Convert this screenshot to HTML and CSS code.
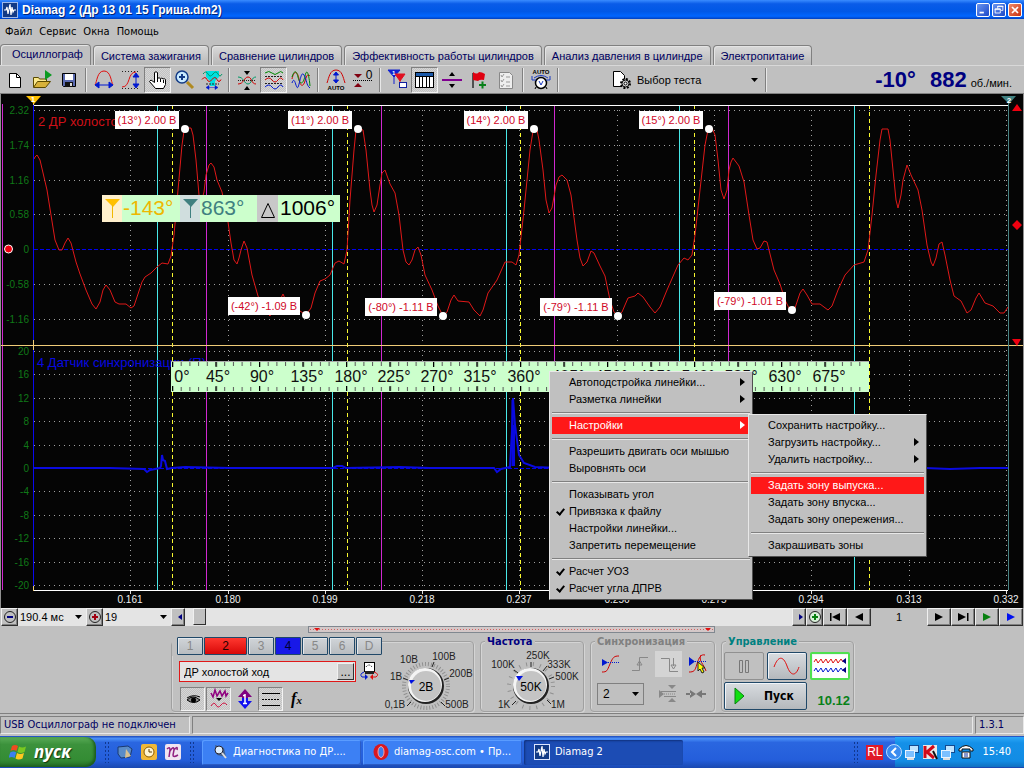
FILE: index.html
```html
<!DOCTYPE html>
<html lang="ru">
<head>
<meta charset="utf-8">
<title>Diamag 2</title>
<link rel="stylesheet" href="styles.css">
</head>
<body>
<header class="titlebar">
  <svg class="app-icon" viewBox="0 0 16 16"><rect x=".5" y=".5" width="15" height="15" fill="#123a86" stroke="#9db8ea"/><path d="M2 8h2l1-3 1 7 2-10 1 11 1-8 1 5 1-2h2" fill="none" stroke="#fff" stroke-width="1.2"/></svg>
  <h1 class="title">Diamag 2 (Др 13 01 15 Гриша.dm2)</h1>
  <div class="window-buttons">
    <button class="wbtn" aria-label="Свернуть"><svg viewBox="0 0 14 14"><path d="M3 10h5" stroke="#fff" stroke-width="2"/></svg></button>
    <button class="wbtn" aria-label="Восстановить"><svg viewBox="0 0 14 14"><path d="M5.500 5.500v-3h6v5h-2M5 3h7M2.500 5.500h6v5h-6zM2 6.500h7" fill="none" stroke="#fff"/></svg></button>
    <button class="wbtn wbtn-close" aria-label="Закрыть"><svg viewBox="0 0 14 14"><path d="M3.500 3.500l7 7M10.500 3.500l-7 7" stroke="#fff" stroke-width="2"/></svg></button>
  </div>
</header>
<nav class="menubar">
  <button>Файл</button><button>Сервис</button><button>Окна</button><button>Помощь</button>
</nav>
<div class="tabs" role="tablist">
  <button class="tab tab-active" role="tab">Осциллограф</button>
  <button class="tab" role="tab">Система зажигания</button>
  <button class="tab" role="tab">Сравнение цилиндров</button>
  <button class="tab" role="tab">Эффективность работы цилиндров</button>
  <button class="tab" role="tab">Анализ давления в цилиндре</button>
  <button class="tab" role="tab">Электропитание</button>
</div>
<div class="toolbar">
  <button class="tool" aria-label="Новый"><svg viewBox="0 0 22 22"><path d="M5.500 4.500h7l4 4v10h-11z" fill="#fff" stroke="#000"/><path d="M12.500 4.500v4h4" fill="none" stroke="#000"/></svg></button>
  <button class="tool" aria-label="Открыть"><svg viewBox="0 0 22 22"><path d="M2.500 18V8.500h5l1 1.500h7v3" fill="#fbe98c" stroke="#5a4a00"/><path d="M2.500 18.500l4-6h13l-5 6z" fill="#d8b23a" stroke="#5a4a00"/><path d="M14 1l7 5-7 5z" fill="#0a9a20"/></svg></button>
  <button class="tool" aria-label="Сохранить"><svg viewBox="0 0 22 22"><path d="M4.500 4.500h13v13h-12l-1-1z" fill="#5a6ab0" stroke="#000"/><rect x="7" y="5" width="8" height="6" fill="#fff"/><rect x="7" y="13" width="8" height="5" fill="#111"/><rect x="12" y="14" width="2" height="3" fill="#ddd"/></svg></button>
  <span class="sep"></span>
  <button class="tool" aria-label="Развернуть по горизонтали"><svg viewBox="0 0 22 22" fill="none"><path d="M2 16C4 13 4 2 11 2s7 11 9 14" stroke="#e01010"/><path d="M4 16h14M6 13l-4 3 4 3zM16 13l4 3-4 3z" stroke="#0018d0" fill="#0018d0"/></svg></button>
  <button class="tool" aria-label="Развернуть по вертикали"><svg viewBox="0 0 22 22" fill="none"><path d="M2 2.500h18M2 19.500h18" stroke="#222" stroke-dasharray="1 2"/><path d="M2 18c9 0 5-15 14-15" stroke="#e01010"/><path d="M16 6v11M13 8l3-4 3 4zM13 15l3 4 3-4z" stroke="#0018d0" fill="#0018d0"/></svg></button>
  <button class="tool tool-on" aria-label="Рука"><svg viewBox="0 0 22 22"><path d="M8.500 19.500l-6-7 1.500-1.500 3.500 2.500V3.500q1.500-1.500 3 0v6q1.500-1.500 3 0 1.500-1 2.500.5 1.500-.8 2.500.5v5l-2 4z" fill="#fff" stroke="#000"/><path d="M10.500 9v4M13.500 10v3M16.500 11v3" stroke="#000"/></svg></button>
  <button class="tool" aria-label="Лупа"><svg viewBox="0 0 22 22"><path d="M13 13l6 6" stroke="#b08a20" stroke-width="3"/><circle cx="8" cy="8" r="6" fill="#c8eaff" stroke="#123a86" stroke-width="1.500"/><path d="M5 8h6M8 5v6" stroke="#123a86" stroke-width="2"/></svg></button>
  <button class="tool" aria-label="Область"><svg viewBox="0 0 22 22" fill="none"><path d="M5 2h13v6l-4 4v5H9v-5L5 8z" fill="#00e0e0"/><path d="M2 5q3-4 5 0t5 0 5 0 4 0" stroke="#096"/><path d="M1 10.500q3-4 5 0t5 0 5 0 4 0" stroke="#d00000"/><path d="M5 15h13" stroke="#222" stroke-dasharray="2 1"/><path d="M8 16.500l-3 2 3 2zM14 16.500l3 2-3 2zM7 18.500h8" fill="#0018d0" stroke="#0018d0" stroke-width=".5"/></svg></button>
  <span class="sep"></span>
  <button class="tool" aria-label="Совместить"><svg viewBox="0 0 22 22" fill="none"><path d="M8 2h6l-3 4zM8 21h6l-3-4z" fill="#000"/><path d="M2 11.500h18" stroke="#222" stroke-dasharray="1 1"/><path d="M2 8c6 0 6 7 10 7s3-7 8-7" stroke="#096"/><path d="M2 15c6 0 6-7 10-7s3 7 8 7" stroke="#d00000"/></svg></button>
  <button class="tool tool-on" aria-label="Раздельно"><svg viewBox="0 0 22 22" fill="none"><path d="M2 4q4-3 7 0t6 0 5 0" stroke="#080"/><path d="M2 11q4-4 7 0t6 0 5 0" stroke="#d00000"/><path d="M2 18q4-4 7 0t6 0 5 0" stroke="#0018d0"/><path d="M2 7.500h18M2 14.500h18" stroke="#222" stroke-dasharray="2 1"/></svg></button>
  <button class="tool" aria-label="Наложить"><svg viewBox="0 0 22 22" fill="none"><path d="M2 10C4 0 8 3 9 10s4 9 6 2 3-7 5-5" stroke="#d00000"/><path d="M2 8C4 2 6 0 8 8s5 8 7-1 4-1 5 10" stroke="#080"/><path d="M2 14c3-9 4 8 6 4s3-17 6-12 2 10 6 13" stroke="#0018d0"/></svg></button>
  <span class="sep"></span>
  <button class="tool" aria-label="Автомасштаб"><svg viewBox="0 0 22 22" fill="none"><path d="M2 14C4 8 5 1 11 1s7 7 9 13" stroke="#d00000"/><path d="M11 4v9M8.500 6l2.500-3 2.500 3zM8.500 11l2.500 3 2.500-3z" stroke="#0018d0" fill="#0018d0"/><text x="11" y="21" text-anchor="middle" class="icon-text">AUTO</text></svg></button>
  <button class="tool" aria-label="Ноль"><svg viewBox="0 0 22 22"><path d="M2 5h8l-4 4zM2 18h8l-4-4z" fill="#800010"/><path d="M1 11.500h20" stroke="#000" stroke-dasharray="1 1"/><text x="17" y="10" text-anchor="middle" class="icon-zero">0</text></svg></button>
  <span class="sep"></span>
  <button class="tool" aria-label="Маркеры"><svg viewBox="0 0 22 22"><path d="M1 1h12L7 8zM7 6v9" fill="#1020d0" stroke="#1020d0"/><path d="M8 5h10l-5 7zM13 10v7" fill="#e01020" stroke="#e01020"/><text x="5" y="6" class="icon-tiny">1</text><rect x="12.500" y="13.500" width="7" height="5" fill="#fff" stroke="#1020a0"/></svg></button>
  <button class="tool tool-on" aria-label="Таблица"><svg viewBox="0 0 22 22"><rect x="1.500" y="3.500" width="18" height="15" fill="#fff" stroke="#000"/><path d="M2 4h17v3H2z" fill="#1a58a8"/><path d="M5.500 7v11M8.500 7v11M12.500 7v11M15.500 7v11M2 7.500h17" stroke="#000"/></svg></button>
  <button class="tool" aria-label="Уровень"><svg viewBox="0 0 22 22"><path d="M1 11h20" stroke="#800090" stroke-width="2"/><path d="M8 7l3-4 3 4zM8 15l3 4 3-4z" fill="#000"/></svg></button>
  <button class="tool" aria-label="Флаг"><svg viewBox="0 0 22 22"><path d="M5 4v15" stroke="#505050" stroke-width="2"/><path d="M5 3q4 3 6 0 3 0 6 2l-1 6q-4-1-6 1l-5-1z" fill="#e00010"/><path d="M11 16h7M14.500 12.500v7" stroke="#08801a" stroke-width="2"/></svg></button>
  <button class="tool" aria-label="Отчёт"><svg viewBox="0 0 22 22"><path d="M4.500 3.500h10l3 3v13h-13z" fill="#eee" stroke="#888"/><path d="M6 6l1 2 2-3M6 11l1 2 2-3M6 16l1 2 2-3M11 8h4M11 13h4M11 17h4" fill="none" stroke="#999"/></svg></button>
  <span class="sep"></span>
  <button class="tool" aria-label="Автоизмерение"><svg viewBox="0 0 22 22"><text x="11" y="5" text-anchor="middle" class="icon-text">AUTO</text><circle cx="11" cy="14" r="5.500" fill="#fff" stroke="#000" stroke-width="1.500"/><path d="M4 9q7-5 14 0M2 7v4h4M20 7v4h-4" fill="none" stroke="#1838c0"/><path d="M9 12l2 4 2-4" fill="none" stroke="#1838c0"/><path d="M6 18l-1 2M16 18l1 2" stroke="#000"/></svg></button>
  <span class="sep"></span>
  <label class="test-pick">
    <svg viewBox="0 0 22 22"><path d="M2.500 2.500h7l4 4v11h-11z" fill="#fff" stroke="#000"/><circle cx="14.500" cy="14.500" r="4.500" fill="#ddd" stroke="#000" stroke-width="2" stroke-dasharray="2 1.500"/><circle cx="14.500" cy="14.500" r="3.500" fill="#ddd" stroke="#000"/><circle cx="14.500" cy="14.500" r="1.500" fill="#fff" stroke="#000"/></svg>
    <select aria-label="Тест"><option>Выбор теста</option></select>
  </label>
  <span class="sep"></span>
  <div class="readout"><b>-10°</b><b>882</b><span>об./мин.</span></div>
</div>
<main class="scope">
  <svg class="plot" viewBox="0 94 1024 514" role="img" aria-label="Осциллограмма">
    <defs>
      <pattern id="minor" x="172" y="361" width="8.700" height="30" patternUnits="userSpaceOnUse"><path d="M.5 0v5M.5 26v4" stroke="#555"/></pattern>
      <pattern id="major" x="172" y="361" width="43.500" height="30" patternUnits="userSpaceOnUse"><path d="M.5 0v6M.5 25v5" stroke="#000" stroke-width="1.500"/></pattern>
    </defs>
    <rect x="1" y="94" width="1022" height="514" fill="#050505"/>
    <path class="grid" d="M34 110.500h974M34 145.500h974M34 180.500h974M34 214.500h974M34 284.500h974M34 319.500h974M34 351.500h974M34 374.500h974M34 398.500h974M34 421.500h974M34 445.500h974M34 491.500h974M34 515.500h974M34 538.500h974M34 562.500h974M34 585.500h974"/>
    <path class="grid" d="M130.500 110v480M228.500 110v480M325.500 110v480M422.500 110v480M519.500 110v480M617.500 110v480M714.500 110v480M811.500 110v480M909.500 110v480M1006.500 110v480"/>
    <path d="M34 249.500h974M34 468.500h974" stroke="#0000f0" stroke-dasharray="4 2"/>
    <path d="M2.500 104v486M206.500 105v485M381.500 105v485M554.500 105v485M728.500 105v485" stroke="#d028d0"/>
    <path d="M157.500 105v485M332.500 105v485M506.500 105v485M679.500 105v485M854.500 105v485" stroke="#48e8e8"/>
    <path d="M172.500 105v485M347.500 105v485M520.500 105v485M694.500 105v485M869.500 105v485" stroke="#f8f830" stroke-dasharray="4 3"/>
    <path class="trace-red" d="M34 159L35 157 37 155 40 160 47 190 51 215 55 240 59 250 62 250 65 243 68 238 71 243 76 262 80 274 86 290 92 304 96 309 100 302 103 290 106 285 110 290 115 302 119 304 126 304 131 308 134 306 138 294 142 282 145 277 151 273 157 267 162 263 168 264 171 256 174 235 178 190 182 145 184 131 186 128 191 128 193 135 196 160 199 195 201 203 204 192 206 175 209 165 211 163 214 167 217 180 222 192 228 222 231 243 234 260 237 264 239 258 241 250 244 241 247 248 252 275 258 296 264 310 270 316 276 308 283 294 287 303 292 307 300 311 306 315 311 308 315 293 320 281 325 279 330 275 335 263 339 261 344 264 347 250 350 200 354 150 356 130 358 128 363 130 366 150 370 190 372 205 374 212 377 205 380 185 382 173 385 170 390 184 395 193 399 215 403 250 406 262 409 265 412 260 415 250 418 247 421 255 425 275 432 290 438 306 443 316 447 312 451 300 454 295 458 301 469 302 474 310 480 316 483 310 488 293 497 280 505 262 512 262 516 265 519 255 524 210 530 150 533 131 537 130 539 140 543 170 546 200 549 213 552 208 556 185 559 177 562 175 567 180 571 195 577 240 580 258 583 266 587 262 591 251 594 253 600 266 605 276 610 300 614 312 618 316 622 312 628 298 635 296 638 293 643 297 650 307 655 313 660 307 667 290 678 265 684 258 688 260 692 255 695 235 700 190 705 145 708 130 712 128 715 135 718 160 721 190 724 199 727 190 729 170 731 162 733 158 739 166 744 182 749 215 753 240 757 249 760 248 764 241 767 242 769 250 774 270 780 284 785 300 790 310 795 308 800 293 803 289 807 295 812 304 820 304 828 310 832 306 838 290 845 275 854 265 864 262 868 250 872 215 876 175 880 140 882 129 888 129 890 140 893 170 896 200 898 208 901 195 903 180 907 165 911 175 918 190 922 210 927 245 931 262 933 266 936 258 939 244 942 242 945 255 950 280 954 296 961 301 967 313 971 310 976 298 979 293 985 303 993 306 1000 313 1004 313 1008 307"/>
    <path class="trace-blue" d="M34 468L110 468 144 469 147 472 150 470 160 468 161 466 162 455 163 460 165 461 167 469 172 468 185 467 230 468 333 468 337 466 342 466 346 468 400 467 430 468 465 468 494 468 497 472 501 469 510 467 512 430 513 398 515 425 517 440 519 455 524 463 535 467 560 468 925 468 950 469 980 468 1008 468"/>
    <path d="M512.500 466V400M514 466V425" stroke="#0808e0" stroke-width="2"/>
    <path d="M34 105.500h974M33 590.500h975" stroke="#fff"/>
    <path d="M33.500 100v490" stroke="#0808f0"/>
    <path d="M1 345.500h1022M33.500 99v6M33.500 340v10M33.500 586v5" stroke="#f0cc78"/>
    <path d="M1008.500 99v491" stroke="#4a8484"/>
    <path d="M1023.500 94v514M.5 94v514" stroke="#909090"/>
    <path d="M130.500 591v3M228.500 591v3M325.500 591v3M422.500 591v3M519.500 591v3M617.500 591v3M714.500 591v3M811.500 591v3M909.500 591v3M1006.500 591v3" stroke="#ddd"/>
    <path d="M26 96h15l-7 8z" fill="#ffc000"/><text class="pin" x="33" y="102" text-anchor="middle">1</text>
    <path d="M1001 96h15l-7 8z" fill="#408080"/><text class="pin" x="1009" y="103" text-anchor="middle">2</text>
    <path d="M1012 111l5-7 5 7zM1012 339h9l-4 7zM1012 225l5-5 5 5-5 5z" fill="#f00010"/>
    <circle cx="8.500" cy="249" r="4" fill="#f00010" stroke="#fff"/>
    <g class="ylabel">
      <text x="29" y="114">2.32</text><text x="29" y="149">1.74</text><text x="29" y="184">1.16</text><text x="29" y="218">0.58</text><text x="29" y="253">0</text><text x="29" y="288">-0.58</text><text x="29" y="323">-1.16</text>
      <text x="29" y="355">20</text><text x="29" y="378">16</text><text x="29" y="402">12</text><text x="29" y="425">8</text><text x="29" y="449">4</text><text x="29" y="472">0</text><text x="29" y="495">-4</text><text x="29" y="519">-8</text><text x="29" y="542">-12</text><text x="29" y="566">-16</text><text x="29" y="589">-20</text>
    </g>
    <g class="xlabel">
      <text x="130" y="603">0.161</text><text x="228" y="603">0.180</text><text x="325" y="603">0.199</text><text x="422" y="603">0.218</text><text x="519" y="603">0.237</text><text x="617" y="603">0.256</text><text x="714" y="603">0.275</text><text x="811" y="603">0.294</text><text x="909" y="603">0.313</text><text x="1006" y="603">0.332</text>
    </g>
    <text class="channel" x="38" y="126" fill="#d01018">2 ДР холосто</text>
    <text class="channel" x="37" y="367" fill="#0808e0">4 Датчик синхронизации (П)</text>
    <g fill="#fff">
      <rect x="115" y="111" width="64" height="18"/><rect x="288" y="111" width="64" height="18"/><rect x="464" y="111" width="64" height="18"/><rect x="639" y="111" width="64" height="18"/>
      <rect x="228" y="297" width="72" height="18"/><rect x="365" y="298" width="72" height="18"/><rect x="540" y="298" width="72" height="18"/><rect x="714" y="292" width="72" height="18"/>
      <circle cx="185" cy="129" r="4"/><circle cx="358" cy="129" r="4"/><circle cx="534" cy="129" r="4"/><circle cx="709" cy="129" r="4"/><circle cx="306" cy="315" r="4"/><circle cx="443" cy="316" r="4"/><circle cx="618" cy="316" r="4"/><circle cx="792" cy="310" r="4"/>
    </g>
    <g class="callout">
      <text x="147" y="124">(13°) 2.00 В</text><text x="320" y="124">(11°) 2.00 В</text><text x="496" y="124">(14°) 2.00 В</text><text x="671" y="124">(15°) 2.00 В</text>
      <text x="264" y="310">(-42°) -1.09 В</text><text x="401" y="311">(-80°) -1.11 В</text><text x="576" y="311">(-79°) -1.11 В</text><text x="750" y="305">(-79°) -1.01 В</text>
    </g>
    <g class="measure">
      <rect x="102" y="195" width="238" height="27" fill="#ccffcc"/>
      <rect x="102" y="195" width="20" height="27" fill="#fff0cc"/><rect x="180" y="195" width="20" height="27" fill="#d0dede"/><rect x="257" y="195" width="21" height="27" fill="#c8c8c8"/>
      <path d="M105 199h15l-7 8z" fill="#ffc000"/><path d="M112.500 205v13" stroke="#f0b800"/>
      <path d="M183 199h15l-7 8z" fill="#408080"/><path d="M190.500 205v13" stroke="#408080"/>
      <path d="M261.500 217.500h13l-6.500-14z" fill="none" stroke="#000"/>
      <text x="123" y="215" fill="#eeb800">-143°</text><text x="201" y="215" fill="#408080">863°</text><text x="280" y="215" fill="#000">1006°</text>
    </g>
    <rect x="171" y="361" width="698" height="31" fill="#ccffcc"/>
    <rect x="172" y="361" width="696" height="30" fill="url(#minor)"/><rect x="172" y="361" width="696" height="30" fill="url(#major)"/>
    <path d="M171 361.500h698" stroke="#aaa"/>
    <g class="ruler">
      <text x="182" y="382">0°</text><text x="218" y="382">45°</text><text x="262" y="382">90°</text><text x="307" y="382">135°</text><text x="351" y="382">180°</text><text x="394" y="382">225°</text><text x="437" y="382">270°</text><text x="480" y="382">315°</text><text x="524" y="382">360°</text><text x="568" y="382">405°</text><text x="611" y="382">450°</text><text x="655" y="382">495°</text><text x="698" y="382">540°</text><text x="741" y="382">585°</text><text x="785" y="382">630°</text><text x="829" y="382">675°</text>
    </g>
  </svg>
  <div class="menu menu-main" role="menu">
    <button class="item has-sub" role="menuitem">Автоподстройка линейки...</button>
    <button class="item has-sub" role="menuitem">Разметка линейки</button>
    <hr>
    <button class="item has-sub item-hot" role="menuitem">Настройки</button>
    <hr>
    <button class="item" role="menuitem">Разрешить двигать оси мышью</button>
    <button class="item" role="menuitem">Выровнять оси</button>
    <hr>
    <button class="item" role="menuitem">Показывать угол</button>
    <button class="item item-checked" role="menuitem">Привязка к файлу</button>
    <button class="item" role="menuitem">Настройки линейки...</button>
    <button class="item" role="menuitem">Запретить перемещение</button>
    <hr>
    <button class="item item-checked" role="menuitem">Расчет УОЗ</button>
    <button class="item item-checked" role="menuitem">Расчет угла ДПРВ</button>
  </div>
  <div class="menu menu-sub" role="menu">
    <button class="item" role="menuitem">Сохранить настройку...</button>
    <button class="item has-sub" role="menuitem">Загрузить настройку...</button>
    <button class="item has-sub" role="menuitem">Удалить настройку...</button>
    <hr>
    <button class="item item-hot" role="menuitem">Задать зону выпуска...</button>
    <button class="item" role="menuitem">Задать зону впуска...</button>
    <button class="item" role="menuitem">Задать зону опережения...</button>
    <hr>
    <button class="item" role="menuitem">Закрашивать зоны</button>
  </div>
</main>
<div class="navrow">
  <button class="nbtn nbtn-round" aria-label="Уменьшить"><svg viewBox="0 0 16 16"><circle cx="8" cy="8" r="5.500" fill="none" stroke="#222"/><path d="M5 8h6" stroke="#000080" stroke-width="2"/></svg></button>
  <select class="nsel" aria-label="Развёртка"><option>190.4 мс</option></select>
  <button class="nbtn nbtn-round" aria-label="Увеличить"><svg viewBox="0 0 16 16"><circle cx="8" cy="8" r="5.500" fill="none" stroke="#222"/><path d="M5 8h6M8 5v6" stroke="#a00010" stroke-width="2"/></svg></button>
  <select class="nsel" aria-label="Масштаб"><option>19</option></select>
  <button class="nbtn nbtn-small" aria-label="Влево"><svg viewBox="0 0 16 16"><path d="M10 5v6L6 8z" fill="#000080"/></svg></button>
  <div class="track"><span class="thumb"></span></div>
  <button class="nbtn nbtn-small" aria-label="Вправо"><svg viewBox="0 0 16 16"><path d="M6 5v6l4-3z" fill="#000080"/></svg></button>
  <button class="nbtn nbtn-round" aria-label="Добавить"><svg viewBox="0 0 16 16"><circle cx="8" cy="8" r="5.500" fill="#d8f0d8" stroke="#222"/><path d="M5 8h6M8 5v6" stroke="#088010" stroke-width="2"/></svg></button>
  <button class="nbtn" aria-label="В начало"><svg viewBox="0 0 16 16"><path d="M3 4h1.500v8H3zM13 4v8L5 8z"/></svg></button>
  <button class="nbtn" aria-label="Назад"><svg viewBox="0 0 16 16"><path d="M12 4v8L4 8z"/></svg></button>
  <span class="page-no">1</span>
  <button class="nbtn" aria-label="Вперёд"><svg viewBox="0 0 16 16"><path d="M4 4v8l8-4z"/></svg></button>
  <button class="nbtn" aria-label="В конец"><svg viewBox="0 0 16 16"><path d="M12 4h1.500v8H12zM3 4v8l8-4z"/></svg></button>
  <button class="nbtn" aria-label="Пуск просмотра"><svg viewBox="0 0 16 16"><path d="M4 4v8l8-4z" fill="#088010"/></svg></button>
  <button class="nbtn" aria-label="Воспроизвести"><svg viewBox="0 0 16 16"><path d="M4 4v8l8-4z" fill="#0010f0"/></svg></button>
</div>
<div class="splitter"><span class="grip"></span></div>
<section class="panel">
  <div class="group group-channel">
    <div class="channels">
      <button class="ch">1</button><button class="ch ch-red">2</button><button class="ch">3</button><button class="ch ch-blue">4</button><button class="ch">5</button><button class="ch">6</button><button class="ch">D</button>
    </div>
    <div class="name-row">
      <div class="name-box"><input type="text" value="ДР холостой ход" aria-label="Имя канала"><button class="dots" aria-label="Выбрать">...</button></div>
      <svg class="sensor" viewBox="0 0 20 20"><rect x="5.500" y="1.500" width="10" height="9" fill="#fff" stroke="#000"/><path d="M6 10h9v3H6z" fill="#222"/><path d="M7 6q3-4 6 0" fill="none" stroke="#000" stroke-dasharray="1 1"/><path d="M5 11q-5 2-2 5h3" fill="none" stroke="#0018d0"/><path d="M6 13l3 3-3 3z" fill="#0018d0"/><path d="M15 11q6 2 2 5h-3" fill="none" stroke="#e01010"/><path d="M14 13l-3 3 3 3z" fill="#e01010"/></svg>
    </div>
    <div class="view-row">
      <button class="tool tool-on" aria-label="Показать"><svg viewBox="0 0 22 22"><path d="M5 12q6-6 13 0-6 5-13 0z" fill="#888" stroke="#000"/><circle cx="11.500" cy="12" r="2.500" fill="#000"/><path d="M5 10q6-4 13-1" fill="none" stroke="#000"/></svg></button>
      <button class="tool tool-on" aria-label="Фильтр"><svg viewBox="0 0 22 22" fill="none"><path d="M3 5l2 4 2-7 2 6 3-5 2 5 3-5 1 5 2-3" stroke="#900080" stroke-width="1.500"/><path d="M8 10h6l-3 3z" fill="#000"/><path d="M3 18q3-5 5-1t5 0 6 0" stroke="#d01040"/></svg></button>
      <button class="tool" aria-label="Инверсия"><svg viewBox="0 0 22 22"><path d="M4 9l7-8 7 8h-4v3H8V9z" fill="#800080"/><path d="M4 13l7 8 7-8h-4v-3H8v3z" fill="#1010f0"/><path d="M11 6v10M9 7.500h2M9 15.500h4" stroke="#fff" stroke-width="1.500"/></svg></button>
      <button class="tool tool-on" aria-label="Уровни"><svg viewBox="0 0 22 22"><path d="M2 5.500h18M2 17.500h18" stroke="#000"/><path d="M2 11.500h18" stroke="#000" stroke-dasharray="2 1"/></svg></button>
      <button class="tool fx" aria-label="Функция">f<small>x</small></button>
    </div>
    <svg class="knob" viewBox="0 0 92 67" role="img" aria-label="Диапазон">
      <g transform="translate(44 41)">
        <circle class="knob-ticks" r="22"/><circle r="18" fill="#222"/><circle r="17" cx="-1" cy="-1" fill="#f4f4f4"/><circle r="15" fill="#c4c4c4"/><path d="M-19 20l4-4M19 20l-4-4M-23-8l5 2M23-8l-5 2M8-24l-2 5" stroke="#222"/><path d="M-17-6l6 0-4 4z" fill="#0010e0"/>
      </g>
      <g class="knob-label"><text x="44" y="46" class="knob-value">2В</text><text x="27" y="18">10В</text><text x="62" y="15">100В</text><text x="14" y="35">1В</text><text x="79" y="32">200В</text><text x="13" y="63">0,1В</text><text x="75" y="63">500В</text></g>
    </svg>
  </div>
  <div class="group group-freq">
    <h2 class="legend navy">Частота</h2>
    <svg class="knob" viewBox="0 0 96 67" role="img" aria-label="Частота">
      <g transform="translate(44 41)">
        <circle class="knob-ticks knob-ticks-wide" r="22"/><circle r="18" fill="#222"/><circle r="17" cx="-1" cy="-1" fill="#f4f4f4"/><circle r="15" fill="#c4c4c4"/><path d="M-19 19l4-4M20 18l-4-4M-17-16l4 3M0-24v5M16-20l-4 5M23-9l-5 2" stroke="#222"/><path d="M-15-10l7 0-4 5z" fill="#0010e0"/>
      </g>
      <g class="knob-label"><text x="44" y="46" class="knob-value">50K</text><text x="51" y="14">250K</text><text x="16" y="23">100K</text><text x="72" y="23">333K</text><text x="80" y="35">500K</text><text x="17" y="63">1K</text><text x="71" y="63">1M</text></g>
    </svg>
  </div>
  <div class="group group-sync">
    <h2 class="legend muted">Синхронизация</h2>
    <div class="sync-row">
      <button class="tool" aria-label="По фронту"><svg viewBox="0 0 22 22" fill="none"><path d="M2 19c5 0 5-1 8-8s4-8 9-8" stroke="#d00000"/><path d="M2 9.500h18" stroke="#0018d0" stroke-dasharray="1 1"/><path d="M2 6l6 3.500L2 13z" fill="#0018d0"/></svg></button>
      <button class="tool" aria-label="Фронт"><svg viewBox="0 0 22 22" fill="none"><path d="M3 17.500h7.500v-13H19M8 12l2.500-4 2.500 4z" stroke="#888"/></svg></button>
      <button class="tool tool-soft" aria-label="Спад"><svg viewBox="0 0 22 22" fill="none"><path d="M3 5.500h8.500v13H20M15.500 5v8M13 12l2.500 4 2.500-4z" stroke="#888"/></svg></button>
      <button class="tool" aria-label="Выбор уровня"><svg viewBox="0 0 22 22" fill="none"><path d="M2 19c5 0 6-1 8-8s4-10 8-9M14 2c-3 6 3 9 5 16" stroke="#d00000"/><path d="M2 8.500h18" stroke="#0018d0" stroke-dasharray="1 1"/><path d="M2 4l6 4.500L2 13z" fill="#0018d0"/><path d="M11 9l7 6h-3l2 4-2 1-2-4-2 2z" fill="#ff0" stroke="#222"/></svg></button>
    </div>
    <div class="sync-row">
      <select class="sync-select" aria-label="Канал синхронизации"><option>2</option></select>
      <button class="tool" aria-label="Порог"><svg viewBox="0 0 22 22"><path d="M3 7v8l5-4zM12 2h8l-4 4zM12 19h8l-4-4z" fill="#888"/><path d="M5 8.500h15M8 13.500h12" stroke="#888"/><path d="M6 11h14" stroke="#888" stroke-dasharray="1 1"/></svg></button>
      <button class="tool" aria-label="Сжать"><svg viewBox="0 0 22 22"><path d="M5 7v8l6-4zM17 7v8l-6-4zM1 10h5v2H1zM16 10h5v2h-5z" fill="#777"/></svg></button>
    </div>
  </div>
  <div class="group group-run">
    <h2 class="legend teal">Управление</h2>
    <div class="run-grid">
      <button class="big big-off" aria-label="Пауза"><svg viewBox="0 0 36 24"><path d="M13.500 6.500h3v12h-3zM19.500 6.500h3v12h-3z" fill="none" stroke="#777"/></svg></button>
      <button class="big" aria-label="Один кадр"><svg viewBox="0 0 36 24"><path d="M5 13C9 2 14 1 18 12s9 10 12 1" fill="none" stroke="#e01010"/></svg></button>
      <button class="big big-on" aria-label="Непрерывно"><svg viewBox="0 0 36 24" fill="none"><path d="M2 8l2-3 2 4 3-4 2 4 3-4 2 4 3-4 2 4 3-4 2 4 3-4 2 3" stroke="#e01010"/><path d="M2 17l2-3 2 4 3-4 2 4 3-4 2 4 3-4 2 4 3-4 2 4 3-4 2 3" stroke="#0018d0"/><path d="M34 4v6l-4-3zM34 13v6l-4-3z" fill="#000080"/></svg></button>
      <button class="big start-run"><svg viewBox="0 0 12 18"><path d="M1 1v16l9-8z" fill="#10e010" stroke="#088010"/></svg>Пуск</button>
      <output class="version">10.12</output>
    </div>
  </div>
</section>
<footer class="status"><span>USB Осциллограф не подключен</span><span></span><span>1.3.1</span></footer>
<div class="taskbar">
  <button class="start"><svg viewBox="0 0 20 20"><path d="M3 4q3-2 6 0L7.500 9q-3-2-6 0z" fill="#f04a20"/><path d="M10 4.500q3 2 7 0L15.500 10q-4 2-7 0z" fill="#7ac820"/><path d="M1.200 10.500q3-2 6 0L5.500 16q-3-2-6 0z" fill="#3a80f0"/><path d="M8 11q3 2 7 0l-1.500 5.500q-4 2-7 0z" fill="#ffc820"/></svg>пуск</button>
  <span class="dots-handle"></span>
  <div class="quick">
    <button aria-label="Рабочий стол"><svg viewBox="0 0 16 16"><path d="M1 3l10-1 4 3-2 8-9 1-3-4z" fill="#5a8cc8" stroke="#1a3870"/><path d="M9 5l5 7-6 2z" fill="#d8c090"/></svg></button>
    <button aria-label="Почта"><svg viewBox="0 0 16 16"><rect width="16" height="16" rx="2" fill="#f0b838"/><circle cx="8" cy="8" r="5" fill="#fff4d0" stroke="#8a5a00"/><path d="M8 5v3h3" fill="none" stroke="#604000"/></svg></button>
    <button aria-label="Заметки"><svg viewBox="0 0 16 16"><rect width="16" height="16" rx="2" fill="#f0e4f0"/><path d="M2 5q3-3 3 1l-1 7M5 7q4-6 4-1l-1 5q0 3 5 0M9 6q4-5 3 0" fill="none" stroke="#902080" stroke-width="1.500"/></svg></button>
  </div>
  <span class="dots-handle"></span>
  <div class="tasks">
    <button class="task"><svg viewBox="0 0 16 16"><path d="M3 1l9 3 2 9-9-2z" fill="#406090"/><circle cx="7" cy="6" r="4" fill="#dceeff" stroke="#223"/><path d="M10 9l4 5" stroke="#ddd" stroke-width="2"/></svg>Диагностика по ДР....</button>
    <button class="task"><svg viewBox="0 0 16 16"><ellipse cx="8" cy="8" rx="7.500" ry="8" fill="#d81820"/><ellipse cx="8" cy="8" rx="3" ry="5.500" fill="#3a7cf0" stroke="#f8a0a0"/></svg>diamag-osc.com • Пр...</button>
    <button class="task task-active"><svg viewBox="0 0 16 16"><rect x=".5" y=".5" width="15" height="15" fill="#123a86" stroke="#dde6ff"/><path d="M2 8h2l1-3 1 7 2-10 1 11 1-8 1 5 1-2h2" fill="none" stroke="#fff" stroke-width="1.200"/></svg>Diamag 2</button>
  </div>
  <span class="dots-handle"></span>
  <span class="lang">RL</span>
  <div class="tray">
    <button class="chevron" aria-label="Показать значки"><svg viewBox="0 0 16 16"><circle cx="8" cy="8" r="7.500" fill="#3a8cf0" stroke="#b8dcff"/><path d="M10 4L6 8l4 4" fill="none" stroke="#fff" stroke-width="2"/></svg></button>
    <svg viewBox="0 0 16 16"><rect x="5.500" y="1.500" width="9" height="7" fill="#bfe4ff" stroke="#134a90"/><rect x="1.500" y="6.500" width="9" height="7" fill="#7cc0ff" stroke="#e8f4ff"/><path d="M3 15h7" stroke="#ddd" stroke-width="2"/></svg>
    <svg viewBox="0 0 16 16"><path d="M1 1h14v14H1z" fill="#e8e8e8"/><path d="M3 2v12M12 2L5 8l7 6" fill="none" stroke="#d00818" stroke-width="3"/><path d="M11 7l4 8" stroke="#111" stroke-width="2"/></svg>
    <svg viewBox="0 0 16 16"><rect x="5.500" y="1.500" width="9" height="7" fill="#bfe4ff" stroke="#134a90"/><rect x="1.500" y="6.500" width="9" height="7" fill="#7cc0ff" stroke="#e8f4ff"/><path d="M3 15h7" stroke="#ddd" stroke-width="2"/></svg>
    <svg viewBox="0 0 16 16"><path d="M1 5q7-7 14 0v2h-3V5H4v2H1z" fill="#fff" stroke="#111"/><path d="M4 8h8v6H4z" fill="#fff" stroke="#111"/><path d="M6 10h4M6 12h4" stroke="#1030a0"/></svg>
    <time>15:40</time>
  </div>
</div>
</body>
</html>
```
FILE: styles.css
```css
:root {
  --face: #c0c0c0;
  --shadow: #808080;
  --navy: #000060;
  --ui: "DejaVu Sans Condensed", "DejaVu Sans", sans-serif;
  --sans: "Liberation Sans", Arial, sans-serif;
}
* { box-sizing: border-box; }
body { margin: 0; display: flex; flex-direction: column; background: var(--face); font: 12px/14px var(--sans); color: #000; overflow-x: hidden; }
button, select, input { font: inherit; color: inherit; margin: 0; padding: 0; border: 0; background: none; border-radius: 0; }
svg { display: block; flex: none; }

.titlebar { display: flex; align-items: center; gap: 4px; height: 19px; padding: 0 2px; background: linear-gradient(#3a8cff, #0a5ce8 20%, #0058e6 60%, #0066ff 85%, #0040c0); }
.app-icon { width: 16px; height: 16px; }
.title { flex: 1; margin: 0; font: bold 12px/18px var(--sans); color: #fff; text-shadow: 1px 1px #00257a; }
.window-buttons { display: flex; gap: 2px; }
.wbtn { width: 14px; height: 14px; border: 1px solid #fff; border-radius: 2px; background: linear-gradient(135deg, #6a96f0, #1c48c8); }
.wbtn svg { width: 12px; height: 12px; }
.wbtn-close { background: linear-gradient(135deg, #f08a68, #c83010); }

.menubar { display: flex; gap: 7px; height: 25px; padding: 0 5px; font: 11px/23px var(--ui); }

.tabs { display: flex; align-items: flex-end; gap: 2px; height: 21px; color: var(--navy); font-size: 11px; }
.tab { height: 20px; padding: 0 7px; border: 1px solid var(--shadow); border-bottom: 0; border-radius: 4px 4px 0 0; background: linear-gradient(#dadada, #b8b8b8); box-shadow: inset 1px 1px #e4e4e4; white-space: nowrap; }
.tab-active { height: 21px; background: var(--face); padding: 0 7px 2px 11px; }

.toolbar { display: flex; align-items: center; height: 29px; padding-left: 1px; border-top: 1px solid #d8d8d8; border-bottom: 1px solid var(--shadow); }
.tool { display: grid; place-items: center; width: 27px; height: 26px; }
.tool svg { width: 22px; height: 22px; }
.tool-on { border: 1px solid; border-color: var(--shadow) #f4f4f4 #f4f4f4 var(--shadow); background: repeating-conic-gradient(#d6d6d6 0 25%, #c2c2c2 0 50%) 0 0 / 2px 2px; }
.tool-soft { background: #d4d4d4; }
.sep { width: 2px; height: 24px; margin: 0 3px; border-left: 1px solid var(--shadow); border-right: 1px solid #e8e8e8; }
.icon-text { font: bold 6px var(--sans); fill: #000; }
.icon-zero { font: 12px var(--sans); }
.icon-tiny { font: bold 6px var(--sans); fill: #fff; }
.test-pick { display: flex; align-items: center; gap: 4px; width: 200px; padding-left: 49px; }
.test-pick svg { width: 22px; height: 22px; }
select { appearance: none; background: url("data:image/svg+xml,%3Csvg xmlns='http://www.w3.org/2000/svg' width='7' height='4'%3E%3Cpath d='M0 0h7L3.500 4z'/%3E%3C/svg%3E") no-repeat right 4px center; }
.test-pick select { flex: 1; height: 20px; font-size: 11px; }
.readout { flex: 1; display: flex; justify-content: flex-end; align-items: baseline; padding-right: 12px; font-size: 11px; }
.readout b { font-size: 22px; line-height: 26px; color: #000080; margin-right: 14px; }
.readout b + b { margin-right: 4px; }

.scope { position: relative; }
.plot { width: 100%; font-family: var(--sans); }
.grid { stroke: #a0a0a0; stroke-dasharray: 1 4; fill: none; }
.trace-red { fill: none; stroke: #e01818; stroke-linejoin: round; }
.trace-blue { fill: none; stroke: #0a0ae0; stroke-width: 2; }
.pin { font: bold 8px var(--sans); fill: #fff; }
.ylabel { font-size: 10px; text-anchor: end; fill: #107818; }
.xlabel { font-size: 10px; text-anchor: middle; fill: #f0f0f0; }
.channel { font-size: 13px; }
.callout { font-size: 11px; text-anchor: middle; fill: #d00828; }
.measure { font-size: 21px; }
.ruler { font-size: 16px; text-anchor: middle; fill: #111; }

.menu { position: absolute; display: flex; flex-direction: column; padding: 2px; background: var(--face); border: 1px solid; border-color: #e8e8e8 #505050 #505050 #e8e8e8; font-size: 11px; }
.menu-main { left: 549px; top: 277px; width: 204px; }
.menu-sub { left: 748px; top: 320px; width: 179px; }
.item { position: relative; height: 17px; padding: 0 16px 2px 17px; text-align: left; white-space: nowrap; }
.menu hr { width: 100%; height: 2px; margin: 4px 0 3px; border: 0; border-top: 1px solid var(--shadow); border-bottom: 1px solid #e8e8e8; }
.item-hot { background: #ff1818; color: #fff; }
.has-sub::after { content: ""; position: absolute; right: 5px; top: 4px; border: 4px solid transparent; border-left: 5px solid currentColor; border-right: 0; }
.item-checked::before { content: ""; position: absolute; left: 6px; top: 4px; width: 3px; height: 6px; border: solid #000; border-width: 0 2px 2px 0; transform: rotate(40deg); }

.navrow { display: flex; height: 18px; padding: 0 1px; font-size: 11px; }
.nbtn { width: 24px; display: grid; place-items: center; background: var(--face); border: 1px solid; border-color: #f0f0f0 #303030 #303030 #f0f0f0; box-shadow: inset -1px -1px var(--shadow); }
.nbtn svg { width: 16px; height: 16px; }
.nbtn-round { width: 17px; }
.nbtn-small { width: 14px; }
.nsel { width: 68px; padding-left: 2px; background-color: #e4e4e4; }
.track { flex: 1; padding-left: 8px; background: #e4e4e4; }
.thumb { display: block; width: 13px; height: 17px; background: var(--face); border: 1px solid; border-color: #f0f0f0 #303030 #303030 #f0f0f0; }
.page-no { width: 56px; text-align: center; line-height: 18px; }

.splitter { height: 7px; padding: 0 309px 0 308px; }
.grip { position: relative; display: block; height: 7px; border: 1px solid #808890; background: radial-gradient(circle, #d06060 1px, transparent 1px) 0 0 / 3px 5px #d4c8c8; }
.grip::before, .grip::after { content: ""; position: absolute; left: 5px; top: 1px; border: 3px solid transparent; border-top-color: #e01010; border-bottom: 0; }
.grip::after { left: auto; right: 3px; }

.panel { display: flex; gap: 6px; height: 81px; padding: 2px 4px 1px 171px; border-bottom: 1px solid var(--shadow); }
.group { position: relative; min-width: 0; }
.group::before { content: ""; position: absolute; inset: 6px 0 0; border: 1px solid #a0a0a0; border-radius: 4px; box-shadow: 1px 1px #d4d4d4, inset 1px 1px #d4d4d4; pointer-events: none; }
.legend { position: relative; width: fit-content; margin: 0 0 0 5px; padding: 0 2px; background: var(--face); font: bold 11px/14px var(--ui); }
.navy { color: #000080; }
.muted { color: #808080; }
.teal { color: #008080; }
.group-channel { display: grid; grid-template: 19px 25px 26px / 210px 92px; row-gap: 3px; padding-left: 1px; width: 303px; padding-top: 2px; }
.channels { position: relative; display: flex; gap: 1px; padding-left: 5px; background: var(--face); }
.ch { width: 26px; height: 18px; border: 1px solid #204868; border-radius: 1px; background: linear-gradient(#d0d4d8, #b8bcc0); color: #888; box-shadow: inset 1px 1px #e4e8ec; }
.ch-red { flex: 1; background: linear-gradient(#ff3830, #d80808); color: #200; box-shadow: none; }
.ch-blue { background: #1818e8; color: #000030; box-shadow: none; }
.name-row { display: flex; gap: 3px; padding: 2px 0 0 7px; }
.name-box { display: flex; width: 177px; height: 21px; padding: 1px; border: 1px solid #e01818; background: #e4e4e4; }
.name-box input { flex: 1; min-width: 0; padding-left: 3px; font-size: 11px; }
.dots { width: 17px; line-height: 8px; background: var(--face); border: 1px solid; border-color: #f0f0f0 #303030 #303030 #f0f0f0; }
.sensor { width: 20px; height: 20px; }
.view-row { display: flex; padding-left: 8px; gap: 1px; }
.view-row .tool { width: 25px; height: 24px; }
.fx { display: block; font: italic bold 16px/22px "Liberation Serif", serif; }
.fx small { font-size: 11px; }
.knob { width: 92px; height: 67px; position: relative; }
.group-channel .knob { grid-area: 1 / 2 / 4 / 3; margin-top: 8px; }
.knob-ticks { fill: none; stroke: #909090; stroke-width: 4; stroke-dasharray: 1 2; }
.knob-ticks-wide { stroke-dasharray: 1 6; }
.knob-label { font-size: 10px; text-anchor: middle; fill: #222; }
.knob-value { font-size: 12px; fill: #000; }
.group-freq { width: 104px; }
.group-freq .knob { width: 96px; margin: -4px 0 0 7px; }
.group-sync { width: 125px; }
.sync-row { display: flex; align-items: center; gap: 2px; height: 30px; padding-left: 7px; }
.sync-select { width: 47px; height: 22px; margin-right: 7px; padding-left: 5px; border: 1px solid var(--shadow); }
.group-run { width: 133px; }
.run-grid { position: relative; display: grid; grid-template-columns: 40px 40px 40px; gap: 2px 3px; padding: 3px 3px 0; }
.big { height: 28px; display: flex; align-items: center; justify-content: center; border: 1px solid #204868; border-radius: 2px; background: linear-gradient(#d8dce0, #b4b8bc); box-shadow: inset 1px 1px #f0f4f8; }
.big svg { width: 36px; height: 24px; }
.big-off { background: var(--face); border-color: #909090; box-shadow: none; }
.big-on { background: #fff; border: 2px solid #50e050; }
.start-run { grid-column: 1 / 3; justify-content: flex-start; gap: 18px; padding-left: 9px; font: bold 12px/14px var(--ui); }
.start-run svg { width: 12px; height: 18px; }
.version { align-self: end; font: bold 13px/18px var(--sans); color: #088018; text-align: right; }

.status { display: grid; grid-template-columns: 190px 1fr 49px; gap: 2px; height: 22px; padding: 2px 0; color: var(--navy); font: 11px/16px var(--ui); }
.status span { border: 1px solid; border-color: var(--shadow) #e8e8e8 #e8e8e8 var(--shadow); padding-left: 3px; white-space: nowrap; }

.taskbar { display: flex; align-items: center; height: 32px; background: linear-gradient(#1c48b8 0, #4a90f8 8%, #2a66e0 20%, #245edb 75%, #1a48b0); color: #fff; font: 11px/14px var(--ui); }
.start { display: flex; align-items: center; gap: 5px; width: 96px; height: 30px; padding-left: 9px; border-radius: 0 10px 10px 0; background: linear-gradient(#5aac58, #3c923c 25%, #348c34 75%, #246c24); font: italic bold 17px/26px "Open Sans", sans-serif; text-shadow: 1px 1px 1px #123812; box-shadow: inset -2px -1px 3px #1c5a1c; }
.start svg { width: 20px; height: 20px; }
.dots-handle { width: 6px; height: 22px; margin: 0 7px 0 8px; background: radial-gradient(circle, #103890 1px, transparent 1px) 0 0 / 3px 4px; }
.quick { display: flex; gap: 8px; }
.quick svg, .task svg, .tray svg { width: 16px; height: 16px; }
.tasks { flex: 1; display: flex; gap: 2px; }
.task { display: flex; align-items: center; gap: 5px; flex: 0 1 159px; height: 25px; padding-left: 10px; border-radius: 2px; background: #3c80f4; box-shadow: inset 1px 1px #5a9cff, inset -1px -1px #2c5cc4; white-space: nowrap; overflow: hidden; }
.task-active { background: #1c4cb4; box-shadow: inset 1px 1px 2px #10307c; }
.lang { padding: 0 1px; background: #e01828; font: 12px/15px var(--sans); }
.tray { display: flex; align-items: center; gap: 2px; height: 30px; margin-left: 12px; padding-right: 13px; background: linear-gradient(#2ca8f8, #1490e8 20%, #128ce4 80%, #1070c0); }
.chevron { margin-left: -9px; }
.tray time { margin-left: 6px; }
```
